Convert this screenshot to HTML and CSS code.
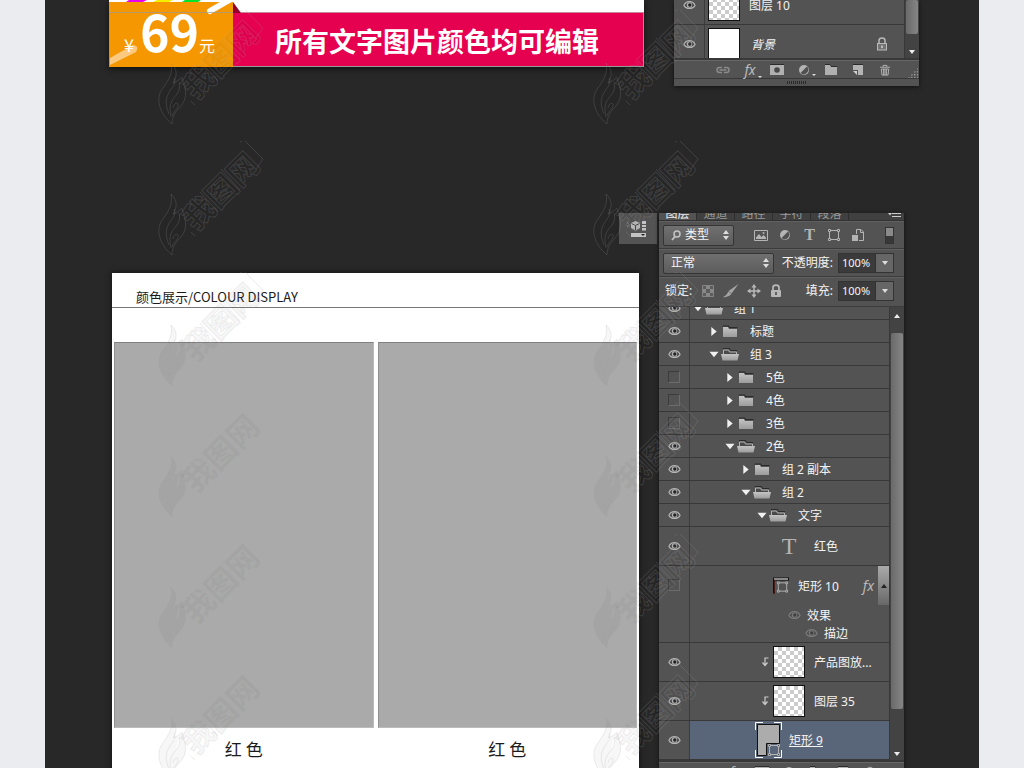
FILE: index.html
```html
<!DOCTYPE html>
<html lang="zh-CN">
<head>
<meta charset="utf-8">
<title>颜色展示</title>
<link rel="stylesheet" href="styles.css">
</head>
<body>
<svg class="sprite" aria-hidden="true">
  <defs>
    <linearGradient id="metal" x1="0" y1="0" x2="0" y2="1"><stop offset="0" stop-color="#c4c4c4"/><stop offset="1" stop-color="#9c9c9c"/></linearGradient>
    <pattern id="dots" width="3" height="3" patternUnits="userSpaceOnUse"><rect width="1.5" height="1.5" fill="#999"/></pattern>
  </defs>
  <symbol id="eye" viewBox="0 0 14 10"><path d="M1 5.400C3.400 0 10.600 0 13 5.400 10.600 9.800 3.400 9.800 1 5.400Z" fill="#484848" stroke="#b4b4b4" stroke-width="1.300"/><circle cx="7" cy="5" r="2.900" fill="#b0b0b0"/><circle cx="7.300" cy="5" r="1.800" fill="#222"/></symbol>
  <symbol id="right" viewBox="0 0 10 10"><path d="M2 0 8 5 2 10Z" fill="#f0f0f0"/></symbol>
  <symbol id="down" viewBox="0 0 10 10"><path d="M0 2H10L5 8Z" fill="#f0f0f0"/></symbol>
  <symbol id="closed" viewBox="0 0 18 13"><path d="M2 1.500V1H8V2.500H16.500" fill="none" stroke="#2b2b2b"/><path d="M2 12V2H7L8 4H16V12Z" fill="url(#metal)"/></symbol>
  <symbol id="open" viewBox="0 0 18 13"><path d="M2.500 7V2H7.500L8.500 4H15.500V7" fill="#4a4a4a" stroke="#b5b5b5"/><path d="M2 .5H8.500L9.500 2.500H16" fill="none" stroke="#2b2b2b"/><path d="M0 6H18L16.500 12.500H1.500Z" fill="url(#metal)"/></symbol>
  <symbol id="lock" viewBox="0 0 12 14"><path d="M3 7V3.500C3 .3 9 .3 9 3.500V7" fill="none" stroke="#b8b8b8" stroke-width="1.500"/><rect x="1.500" y="6.500" width="9" height="6.500" fill="#747474" stroke="#b8b8b8"/><path d="M6 8.500V11" stroke="#ccc" stroke-width="1.500"/></symbol>
  <symbol id="lockfull" viewBox="0 0 12 14"><path d="M3 7V3.500C3 .3 9 .3 9 3.500V7" fill="none" stroke="#b8b8b8" stroke-width="1.700"/><rect x="1" y="6" width="10" height="7" rx="1" fill="#b8b8b8"/><path d="M6 8V11" stroke="#444" stroke-width="1.500"/></symbol>
  <symbol id="clip" viewBox="0 0 7 10"><path d="M6.500 1H3V8M.5 5.500 3 8.500 5.500 5.500" fill="none" stroke="#ccc" stroke-width="1.200"/></symbol>
  <symbol id="frame" viewBox="0 0 14 14"><path d="M2.500 2.500H11.500V11.500H2.500Z" fill="none" stroke="#b4b4b4"/><path d="M1.500 1.500H3.500V3.500H1.500ZM10.500 1.500H12.500V3.500H10.500ZM1.500 10.500H3.500V12.500H1.500ZM10.500 10.500H12.500V12.500H10.500Z" fill="#444" stroke="#b4b4b4"/></symbol>
  <symbol id="updown" viewBox="0 0 6 10"><path d="M0 4 3 0 6 4ZM0 6H6L3 10Z" fill="#ddd"/></symbol>
  <symbol id="half" viewBox="0 0 12 12"><circle cx="6" cy="6" r="5" fill="#b4b4b4"/><path d="M9 2.500 2.500 9A4.600 4.600 0 0 0 9 2.500Z" fill="#505050"/></symbol>
  <symbol id="chain" viewBox="0 0 16 10"><path d="M7 2.500H4.500a2.500 2.500 0 0 0 0 5H7M9 2.500H11.500a2.500 2.500 0 0 1 0 5H9M4.500 5H11.500" fill="none" stroke="#8a8a8a" stroke-width="1.500"/></symbol>
  <symbol id="mask" viewBox="0 0 14 12"><path d="M0 .5H14" stroke="#2b2b2b"/><rect y="1" width="14" height="10" fill="#b0b0b0"/><circle cx="7" cy="6" r="2.800" fill="#484848"/></symbol>
  <symbol id="folder" viewBox="0 0 14 12"><path d="M1 .5H6L7 2.500H13" fill="none" stroke="#2b2b2b"/><path d="M1 11V1H6L7 3H13V11Z" fill="#b0b0b0"/></symbol>
  <symbol id="page" viewBox="0 0 12 12"><path d="M1 .5H11" stroke="#2b2b2b"/><path d="M1 1H11V11H6V6H1Z" fill="#b4b4b4"/><path d="M1 7H5V11Z" fill="#d0d0d0"/></symbol>
  <symbol id="bin" viewBox="0 0 12 13"><path d="M.5 3.500H11.500M4 3V1.500H8V3M2 5.500 2.700 12H9.300L10 5.500ZM4.500 5.500V12M6 5.500V12M7.500 5.500V12" fill="none" stroke="#b8b8b8"/></symbol>
  <symbol id="mark" viewBox="0 0 116 116">
    <path d="M14 114C1 103-3 88 5 78 12 68 15 62 13 53 20 60 19 66 15 73 23 70 24 66 24 68 29 82 29 89 22 97 17 102 14 107 14 114ZM11 104C6 92 8 86 14 78 18 73 17 70 16 68M13 107C10 94 14 90 19 84 22 80 22 76 21 72M15 98C16 92 21 92 20 96 19 100 16 100 14 106"/>
    <text x="0" y="0" transform="translate(38 91) rotate(-45)">我图网</text>
    <path fill="none" d="M37 95 33 91M82 1 86-1 105 18 98 28M60 71 42 51M82 49 63 28"/>
  </symbol>
</svg>

<main class="stage">
  <section class="row promo">
    <div class="banner">
      <div class="price">
        <svg class="price-art" viewBox="0 0 134 67" aria-hidden="true">
          <rect width="124" height="3" fill="#fff"/>
          <path d="M20 0H38L34 2H17Z" fill="#e800f0"/><path d="M48 0H64L60 2H44Z" fill="#f4f000"/><path d="M76 0H92L89 2H73Z" fill="#00e52b"/>
          <path d="M0 2H124V67H0Z" fill="#f59700"/>
          <path d="M101 11 124-2" stroke="#fff" stroke-width="6" stroke-linecap="round"/>
          <path d="M1 65V58L24 45Q31 46 27 52Z" fill="#fbc980"/>
          <path d="M.5 66V12.500H124" fill="none" stroke="#999" stroke-opacity=".7"/>
          <path d="M124 2 132 13H124Z" fill="#94002b"/>
        </svg>
        <span class="yen">¥</span><strong class="amount">69</strong><span class="unit">元</span>
      </div>
      <p class="slogan">所有文字图片颜色均可编辑</p>
    </div>

    <aside class="panel panel-small" aria-label="图层">
      <div class="list-wrap">
        <ul class="layers clipped-short">
          <li class="layer tall"><button class="see" aria-label="显示"><svg class="eye"><use href="#eye"/></svg></button><div class="item top-item"><span class="thumb checker"></span><span class="label">图层 10</span></div></li>
          <li class="layer tall"><button class="see" aria-label="显示"><svg class="eye"><use href="#eye"/></svg></button><div class="item top-item"><span class="thumb"></span><em class="label">背景</em><svg class="lock end"><use href="#lock"/></svg></div></li>
        </ul>
        <div class="scroll"><span class="thumb-bar short"></span><svg class="arrow" viewBox="0 0 6 4"><path d="M0 0H6L3 4Z"/></svg></div>
      </div>
      <footer class="tools">
        <button aria-label="链接"><svg class="i16"><use href="#chain"/></svg></button>
        <button class="fx more">fx</button>
        <button aria-label="蒙版"><svg class="i14"><use href="#mask"/></svg></button>
        <button class="more" aria-label="调整"><svg class="i14"><use href="#half"/></svg></button>
        <button aria-label="新建组"><svg class="i14"><use href="#folder"/></svg></button>
        <button aria-label="新建图层"><svg class="i14"><use href="#page"/></svg></button>
        <button aria-label="删除"><svg class="i14"><use href="#bin"/></svg></button>
        <svg class="corner" viewBox="0 0 10 10"><path d="M10 0V10H0Z" fill="url(#dots)"/></svg>
      </footer>
      <div class="grip"><span></span></div>
    </aside>
  </section>

  <section class="row display">
    <div class="left">
      <button class="dock" aria-label="3D">
        <svg viewBox="0 0 20 20"><path d="M0 3 2 5.500 0 8" fill="none" stroke="#888"/><path d="M4 4 8.500 2 13 4V9L8.500 11.500 4 9Z" fill="#b8b8b8"/><path d="M4.500 4.500 8.500 6.500 12.500 4.500M8.500 6.500V11" fill="none" stroke="#444"/><path d="M15 2H19V5H15ZM15 6H19V8H15ZM15 9H19V11.500H15ZM4 14H19V18H4Z" fill="#c4c4c4"/><path d="M14 15H18L16 17Z" fill="#222"/></svg>
      </button>
      <article class="card">
        <h1>颜色展示/COLOUR DISPLAY</h1>
        <div class="swatches">
          <figure><div class="swatch"></div><figcaption>红 色</figcaption></figure>
          <figure><div class="swatch"></div><figcaption>红 色</figcaption></figure>
        </div>
      </article>
    </div>

    <aside class="panel panel-large" aria-label="图层面板">
      <nav class="tabs"><button class="on">图层</button><button>通道</button><button>路径</button><button>字符</button><button>段落</button><svg class="menu" viewBox="0 0 13 7"><path d="M0 0H4L2 2.500Z" fill="#ccc"/><path d="M4 .5H13M4 3.500H13" stroke="#ccc"/></svg></nav>
      <div class="bar filter">
        <label class="pick pick-type"><svg class="find" viewBox="0 0 10 11"><circle cx="6" cy="4" r="3" fill="none" stroke="#c4c4c4" stroke-width="1.500"/><path d="M4 6.500 1 10" stroke="#c4c4c4" stroke-width="1.800"/></svg><select aria-label="筛选"><option>类型</option></select><svg class="ud"><use href="#updown"/></svg></label>
        <div class="filter-icons">
          <button aria-label="像素"><svg viewBox="0 0 14 14"><path d="M.5 2.500H13.500V12.500H.5Z" fill="none" stroke="#b4b4b4"/><path d="M2 11V9.500L5 6 7.500 9 9.500 7 12 9.500V11Z" fill="#b4b4b4"/><circle cx="9.500" cy="5" r="1" fill="#b4b4b4"/></svg></button>
          <button aria-label="调整"><svg class="round"><use href="#half"/></svg></button>
          <button class="letter">T</button>
          <button aria-label="形状"><svg><use href="#frame"/></svg></button>
          <button aria-label="智能对象"><svg viewBox="0 0 14 14"><path d="M5.500 6V1.500H10L12.500 4V12.500H8" fill="none" stroke="#b4b4b4"/><path d="M9.500 1V4.500H13" fill="none" stroke="#b4b4b4"/><path d="M1 7H7V13H1Z" fill="#b4b4b4"/></svg></button>
        </div>
        <button class="switch" aria-label="开关"><span></span></button>
      </div>
      <div class="bar">
        <label class="pick pick-blend"><select aria-label="混合模式"><option>正常</option></select><svg class="ud"><use href="#updown"/></svg></label>
        <label class="name" for="opacity">不透明度:</label>
        <span class="combo"><input id="opacity" value="100%"><button aria-label="更多"><svg viewBox="0 0 6 4"><path d="M0 0H6L3 4Z"/></svg></button></span>
      </div>
      <div class="bar locks">
        <span class="lock-name">锁定:</span>
        <button class="lock-tool" aria-label="透明"><svg viewBox="0 0 14 14"><path d="M1.500 1.500H12.500V12.500H1.500Z" fill="#5c5c5c" stroke="#858585"/><path d="M5 2H9V5H5ZM2 5H5V9H2ZM9 5H12V9H9ZM5 9H9V12H5Z" fill="#888"/></svg></button>
        <button class="lock-tool" aria-label="画笔"><svg class="brush" viewBox="0 0 16 14"><path d="M15.500 0 8.500 9.500 5.500 7Z" fill="#a4a4a4"/><path d="M5.500 7.500 8.500 10Q5 14 0 13 3 12 5.500 7.500Z" fill="#a4a4a4"/></svg></button>
        <button class="lock-tool" aria-label="移动"><svg viewBox="0 0 14 14"><path d="M7 2V12M2 7H12" stroke="#b8b8b8" stroke-width="1.500"/><path d="M7 0 9.500 3.500H4.500ZM7 14 4.500 10.500H9.500ZM0 7 3.500 4.500V9.500ZM14 7 10.500 9.500V4.500Z" fill="#b8b8b8"/></svg></button>
        <button class="lock-tool" aria-label="全部"><svg><use href="#lockfull"/></svg></button>
        <label class="name" for="fill">填充:</label>
        <span class="combo"><input id="fill" value="100%"><button aria-label="更多"><svg viewBox="0 0 6 4"><path d="M0 0H6L3 4Z"/></svg></button></span>
      </div>

      <div class="list-wrap">
        <ul class="layers clipped-group">
          <li class="layer"><button class="see" aria-label="显示"><svg class="eye"><use href="#eye"/></svg></button><div class="item group l0"><svg class="tri"><use href="#down"/></svg><svg class="dir"><use href="#open"/></svg><span class="label">组 1</span></div></li>
          <li class="layer"><button class="see" aria-label="显示"><svg class="eye"><use href="#eye"/></svg></button><div class="item group l1"><svg class="tri"><use href="#right"/></svg><svg class="dir"><use href="#closed"/></svg><span class="label">标题</span></div></li>
          <li class="layer"><button class="see" aria-label="显示"><svg class="eye"><use href="#eye"/></svg></button><div class="item group l1"><svg class="tri"><use href="#down"/></svg><svg class="dir"><use href="#open"/></svg><span class="label">组 3</span></div></li>
          <li class="layer"><button class="see" aria-label="隐藏"><span class="off"></span></button><div class="item group l2"><svg class="tri"><use href="#right"/></svg><svg class="dir"><use href="#closed"/></svg><span class="label">5色</span></div></li>
          <li class="layer"><button class="see" aria-label="隐藏"><span class="off"></span></button><div class="item group l2"><svg class="tri"><use href="#right"/></svg><svg class="dir"><use href="#closed"/></svg><span class="label">4色</span></div></li>
          <li class="layer"><button class="see" aria-label="隐藏"><span class="off"></span></button><div class="item group l2"><svg class="tri"><use href="#right"/></svg><svg class="dir"><use href="#closed"/></svg><span class="label">3色</span></div></li>
          <li class="layer"><button class="see" aria-label="显示"><svg class="eye"><use href="#eye"/></svg></button><div class="item group l2"><svg class="tri"><use href="#down"/></svg><svg class="dir"><use href="#open"/></svg><span class="label">2色</span></div></li>
          <li class="layer"><button class="see" aria-label="显示"><svg class="eye"><use href="#eye"/></svg></button><div class="item group l3"><svg class="tri"><use href="#right"/></svg><svg class="dir"><use href="#closed"/></svg><span class="label">组 2 副本</span></div></li>
          <li class="layer"><button class="see" aria-label="显示"><svg class="eye"><use href="#eye"/></svg></button><div class="item group l3"><svg class="tri"><use href="#down"/></svg><svg class="dir"><use href="#open"/></svg><span class="label">组 2</span></div></li>
          <li class="layer"><button class="see" aria-label="显示"><svg class="eye"><use href="#eye"/></svg></button><div class="item group l4"><svg class="tri"><use href="#down"/></svg><svg class="dir"><use href="#open"/></svg><span class="label">文字</span></div></li>
          <li class="layer tall"><button class="see" aria-label="显示"><svg class="eye"><use href="#eye"/></svg></button><div class="item l5"><span class="type-thumb">T</span><span class="label">红色</span></div></li>
          <li class="layer">
            <button class="see see-top" aria-label="隐藏"><span class="off"></span></button>
            <div class="stack">
              <div class="item tall-item l5"><svg class="shape-thumb" viewBox="0 0 16 16"><path d="M0 0H16V3H2V16H0Z" fill="#111"/><path d="M1 1.500H15" stroke="#fff"/><path d="M1.500 3V16" stroke="#4a1c18"/><svg x="3" y="3" width="13" height="13"><use href="#frame"/></svg></svg><span class="label">矩形 10</span><span class="fx end">fx</span><button class="fold" aria-label="折叠"><svg viewBox="0 0 6 4"><path d="M0 4H6L3 0Z"/></svg></button></div>
              <div class="effect"><svg class="eye dim"><use href="#eye"/></svg><span class="label">效果</span></div>
              <div class="effect deeper"><svg class="eye dim"><use href="#eye"/></svg><span class="label">描边</span></div>
            </div>
          </li>
          <li class="layer tall"><button class="see" aria-label="显示"><svg class="eye"><use href="#eye"/></svg></button><div class="item clip-item"><svg class="clip"><use href="#clip"/></svg><span class="thumb checker"></span><span class="label">产品图放...</span></div></li>
          <li class="layer tall"><button class="see" aria-label="显示"><svg class="eye"><use href="#eye"/></svg></button><div class="item clip-item"><svg class="clip"><use href="#clip"/></svg><span class="thumb checker"></span><span class="label">图层 35</span></div></li>
          <li class="layer tall"><button class="see" aria-label="显示"><svg class="eye"><use href="#eye"/></svg></button><div class="item selected"><svg class="vector" viewBox="0 0 27 36"><path d="M.5 8V.5H8M19 .5H26.500V8M.5 28V35.500H8M19 35.500H26.500V28" fill="none" stroke="#fff"/><path d="M2.500 2.500H24.500V21.500H11.500V33.500H2.500Z" fill="#acacac" stroke="#111"/><svg x="12" y="21" width="14" height="14"><use href="#frame"/></svg></svg><a class="label" href="#">矩形 9</a></div></li>
        </ul>
        <div class="scroll"><svg class="arrow" viewBox="0 0 6 4"><path d="M0 4H6L3 0Z"/></svg><span class="thumb-bar"></span><svg class="arrow" viewBox="0 0 6 4"><path d="M0 0H6L3 4Z"/></svg></div>
      </div>
      <footer class="tools">
        <button aria-label="链接"><svg class="i16"><use href="#chain"/></svg></button>
        <button class="fx more">fx</button>
        <button aria-label="蒙版"><svg class="i14"><use href="#mask"/></svg></button>
        <button class="more" aria-label="调整"><svg class="i14"><use href="#half"/></svg></button>
        <button aria-label="新建组"><svg class="i14"><use href="#folder"/></svg></button>
        <button aria-label="新建图层"><svg class="i14"><use href="#page"/></svg></button>
        <button aria-label="删除"><svg class="i14"><use href="#bin"/></svg></button>
        <svg class="corner" viewBox="0 0 10 10"><path d="M10 0V10H0Z" fill="url(#dots)"/></svg>
      </footer>
    </aside>
  </section>

  <div class="marks" aria-hidden="true">
    <svg><use href="#mark"/></svg><svg><use href="#mark"/></svg>
    <svg><use href="#mark"/></svg><svg><use href="#mark"/></svg>
    <svg><use href="#mark"/></svg><svg><use href="#mark"/></svg>
    <svg><use href="#mark"/></svg><svg><use href="#mark"/></svg>
    <svg><use href="#mark"/></svg><svg><use href="#mark"/></svg>
    <svg><use href="#mark"/></svg><svg><use href="#mark"/></svg>
  </div>
</main>
</body>
</html>
```
FILE: styles.css
```css
* { box-sizing: border-box; }
body { margin: 0; background: #ebecf0; font-family: "Noto Sans", "Noto Sans CJK SC", sans-serif; }
button, select, input { font: inherit; color: inherit; margin: 0; padding: 0; border: 0; background: none; }
svg { display: block; flex: none; }
p, h1, ul, figure { margin: 0; padding: 0; }
.sprite { position: absolute; width: 0; height: 0; }

.stage { position: relative; margin: 0 45px; height: 100vh; overflow: hidden; background: #282828; }
.row { display: flex; align-items: flex-start; }
.promo { padding: 0 60px 0 64px; gap: 30px; }
.display { padding: 0 75px 0 67px; gap: 20px; margin-top: 127px; }

/* promo banner */
.banner { flex: 1; display: flex; height: 67px; font-family: "Noto Sans CJK SC", sans-serif; color: #fff; background: #fff; border-bottom: 1px solid #999; box-shadow: 0 2px 6px #111; }
.price { position: relative; width: 124px; height: 66px; display: flex; align-items: baseline; line-height: 60px; padding-left: 15px; }
.price-art { position: absolute; left: 0; top: 0; width: 134px; height: 67px; }
.price span, .price strong { position: relative; }
.yen { font-size: 18px; width: 16px; }
.amount { font-size: 50px; font-weight: 700; }
.unit { font-size: 16px; }
.slogan { flex: 1; margin-top: 12px; border-top: 1px solid #c98a9c; border-right: 1px solid #999; background: #e60050; padding-left: 42px; font-size: 27px; font-weight: 700; line-height: 56px; white-space: nowrap; }

/* colour card */
.left { flex: 1; display: flex; flex-direction: column; }
.dock { align-self: flex-end; width: 38px; height: 31px; margin: 0 -18px 29px 0; padding: 4px 8px; background: #545454; }
.dock svg { width: 20px; height: 20px; }
.card { background: #fff; font-family: "Noto Sans CJK SC", sans-serif; color: #1b1b1b; box-shadow: 0 0 6px #111; padding-bottom: 40px; }
.card h1 { font-size: 13px; font-weight: 400; line-height: 20px; padding: 14px 24px 0; border-bottom: 1px solid #777; white-space: nowrap; }
.swatches { display: grid; grid-template-columns: 1fr 1fr; gap: 4px; padding: 34px 2px 0; }
.swatch { height: 386px; background: #aaa; border: 1px solid #bbb; border-top-color: #808080; border-left-color: #909090; }
figcaption { font-size: 17px; line-height: 24px; margin-top: 9px; text-align: center; }

/* layer panels */
.panel { flex: none; background: #535353; color: #f4f4f4; font-size: 12px; line-height: 16px; box-shadow: 0 1px 4px #111; }
.panel-small, .panel-large { width: 245px; }
.list-wrap { display: flex; border-bottom: 2px solid #383838; }
.layers { flex: 1; list-style: none; overflow: hidden; min-width: 0; }
.clipped-short { height: 58px; }
.clipped-short .layer:first-child { margin-top: -14px; }
.clipped-group .layer:first-child { margin-top: -10px; }
.layer { display: flex; min-height: 23px; border-bottom: 1px solid #383838; }
.tall { height: 39px; }
.see { flex: none; width: 31px; display: flex; align-items: center; justify-content: center; border-right: 1px solid #3c3c3c; }
.see-top { align-items: flex-start; padding-top: 13px; }
.eye { width: 13px; height: 10px; }
.dim { opacity: .4; }
.off { width: 12px; height: 12px; border: 1px solid #6c6c6c; border-top-color: #3c3c3c; border-left-color: #3c3c3c; }
.item { flex: 1; display: flex; align-items: center; white-space: nowrap; min-width: 0; }
.label { padding-top: 2px; }
.top-item { padding: 0 16px 0 3px; gap: 9px; }
.top-item em { padding-left: 2px; }
.end { margin-left: auto; }
.lock { width: 12px; height: 14px; }
.tri { width: 10px; height: 9px; }
.dir { width: 18px; height: 13px; margin: 0 11px 0 2px; }
.l0 { padding-left: 3px; }
.l1 { padding-left: 19px; }
.l2 { padding-left: 35px; }
.l3 { padding-left: 51px; }
.l4 { padding-left: 67px; }
.l5 { padding-left: 83px; }
.thumb { flex: none; width: 32px; height: 32px; border: 1px solid #111; background-color: #fff; }
.checker { background-image: conic-gradient(#ccc 25%, #fff 0 50%, #ccc 0 75%, #fff 0); background-size: 8px 8px; }
.type-thumb { width: 32px; margin-right: 9px; text-align: center; font: 400 24px/24px "Liberation Serif", serif; color: #b4b4b4; }
.shape-thumb { width: 16px; height: 17px; margin-right: 9px; }
.stack { flex: 1; display: flex; flex-direction: column; min-width: 0; }
.tall-item { flex: none; height: 39px; }
.fx { font: italic 14px/16px "Noto Sans", sans-serif; color: #bbb; }
.fold { width: 11px; height: 39px; margin-left: 4px; display: flex; align-items: center; justify-content: center; background: linear-gradient(#aaa, #686868); }
.fold svg { width: 6px; height: 4px; fill: #222; }
.effect { display: flex; align-items: center; gap: 6px; height: 19px; padding-left: 98px; }
.deeper { height: 18px; padding-left: 115px; }
.clip { width: 7px; height: 10px; margin-right: 4px; }
.clip-item { padding-left: 72px; }
.clip-item .thumb { margin-right: 9px; }
.selected { background: #596679; padding-left: 65px; gap: 7px; }
.selected a { color: inherit; text-decoration: underline; }
.vector { width: 27px; height: 36px; }
.scroll { width: 15px; display: flex; flex-direction: column; align-items: center; justify-content: space-between; background: #434343; border-left: 1px solid #383838; padding: 7px 0 4px; }
.panel-small .scroll { padding-top: 0; }
.arrow { width: 6px; height: 4px; fill: #eee; }
.thumb-bar { flex: 1; width: 12px; margin: 15px 0 43px; border-radius: 2px; background: linear-gradient(90deg, #6a6a6a, #858585); }
.short { flex: none; height: 34px; margin: 0; }
.tools { display: flex; align-items: center; gap: 11px; height: 18px; padding-left: 41px; border-top: 1px solid #666; }
.tools button { width: 16px; display: flex; justify-content: center; position: relative; }
.tools .more::after { content: ""; position: absolute; right: -4px; bottom: 0; border: 2px solid transparent; border-top-color: #ddd; border-bottom: 0; }
.i16 { width: 16px; height: 10px; }
.i14 { width: 14px; height: 12px; }
.corner { width: 10px; height: 10px; margin: 6px 1px 0 auto; }
.grip { height: 8px; border-top: 1px solid #383838; display: flex; justify-content: center; align-items: center; }
.grip span { width: 20px; height: 3px; background: repeating-linear-gradient(90deg, #2a2a2a 0 1px, #535353 1px 2px); }

/* panel header */
.tabs { display: flex; align-items: flex-end; height: 8px; overflow: hidden; background: #404040; color: #999; border-bottom: 1px solid #333; }
.tabs button { width: 38px; line-height: 12px; border-right: 1px solid #2f2f2f; }
.tabs .on { background: #535353; color: #eee; }
.menu { width: 13px; height: 7px; margin: 0 3px 0 auto; }
.bar { display: flex; align-items: center; height: 28px; padding: 0 10px 0 4px; border-bottom: 1px solid #3c3c3c; border-top: 1px solid #606060; }
.locks { height: 30px; padding-bottom: 2px; }
.pick { display: flex; align-items: center; height: 21px; padding: 0 4px 0 7px; border: 1px solid #353535; border-radius: 2px; background: linear-gradient(#707070, #5c5c5c); }
.pick select { flex: 1; appearance: none; min-width: 0; }
.pick-type { width: 71px; gap: 4px; }
.pick-blend { width: 111px; }
.find { width: 10px; height: 11px; }
.ud { width: 6px; height: 10px; }
.filter-icons { flex: 1; display: flex; align-items: center; justify-content: space-between; padding: 0 20px 0 20px; }
.filter-icons svg, .lock-tool svg { width: 14px; height: 14px; }
.filter-icons .round { height: 12px; }
.lock-tool .brush { width: 16px; }
.letter { width: 14px; font: 700 16px/14px "Liberation Serif", serif; color: #b4b4b4; }
.switch { width: 9px; height: 17px; background: #383838; border: 1px solid #333; display: flex; align-items: flex-start; }
.switch span { flex: 1; height: 8px; background: #8a8a8a; }
.name { margin-left: auto; padding-right: 5px; white-space: nowrap; }
.combo { display: flex; height: 20px; width: 56px; border: 1px solid #333; }
.combo input { width: 36px; padding-left: 3px; background: #3b3b3b; font-size: 11px; }
.combo button { flex: 1; display: flex; align-items: center; justify-content: center; background: #666; border-left: 1px solid #333; }
.combo svg { width: 6px; height: 4px; fill: #ddd; }
.locks .lock-name { width: 30px; padding-left: 2px; margin-right: 8px; white-space: nowrap; }
.lock-tool { margin-right: 8px; }

/* watermark overlay */
.marks { position: absolute; left: 113px; top: 10px; display: grid; grid-template-columns: repeat(2, 435px); grid-auto-rows: 116px; gap: 15px 0; pointer-events: none; }
.marks svg { width: 116px; height: 116px; fill: rgba(0, 0, 0, .03); stroke: rgba(160, 160, 160, .2); font: 700 31px "Noto Sans CJK SC", sans-serif; }
```
